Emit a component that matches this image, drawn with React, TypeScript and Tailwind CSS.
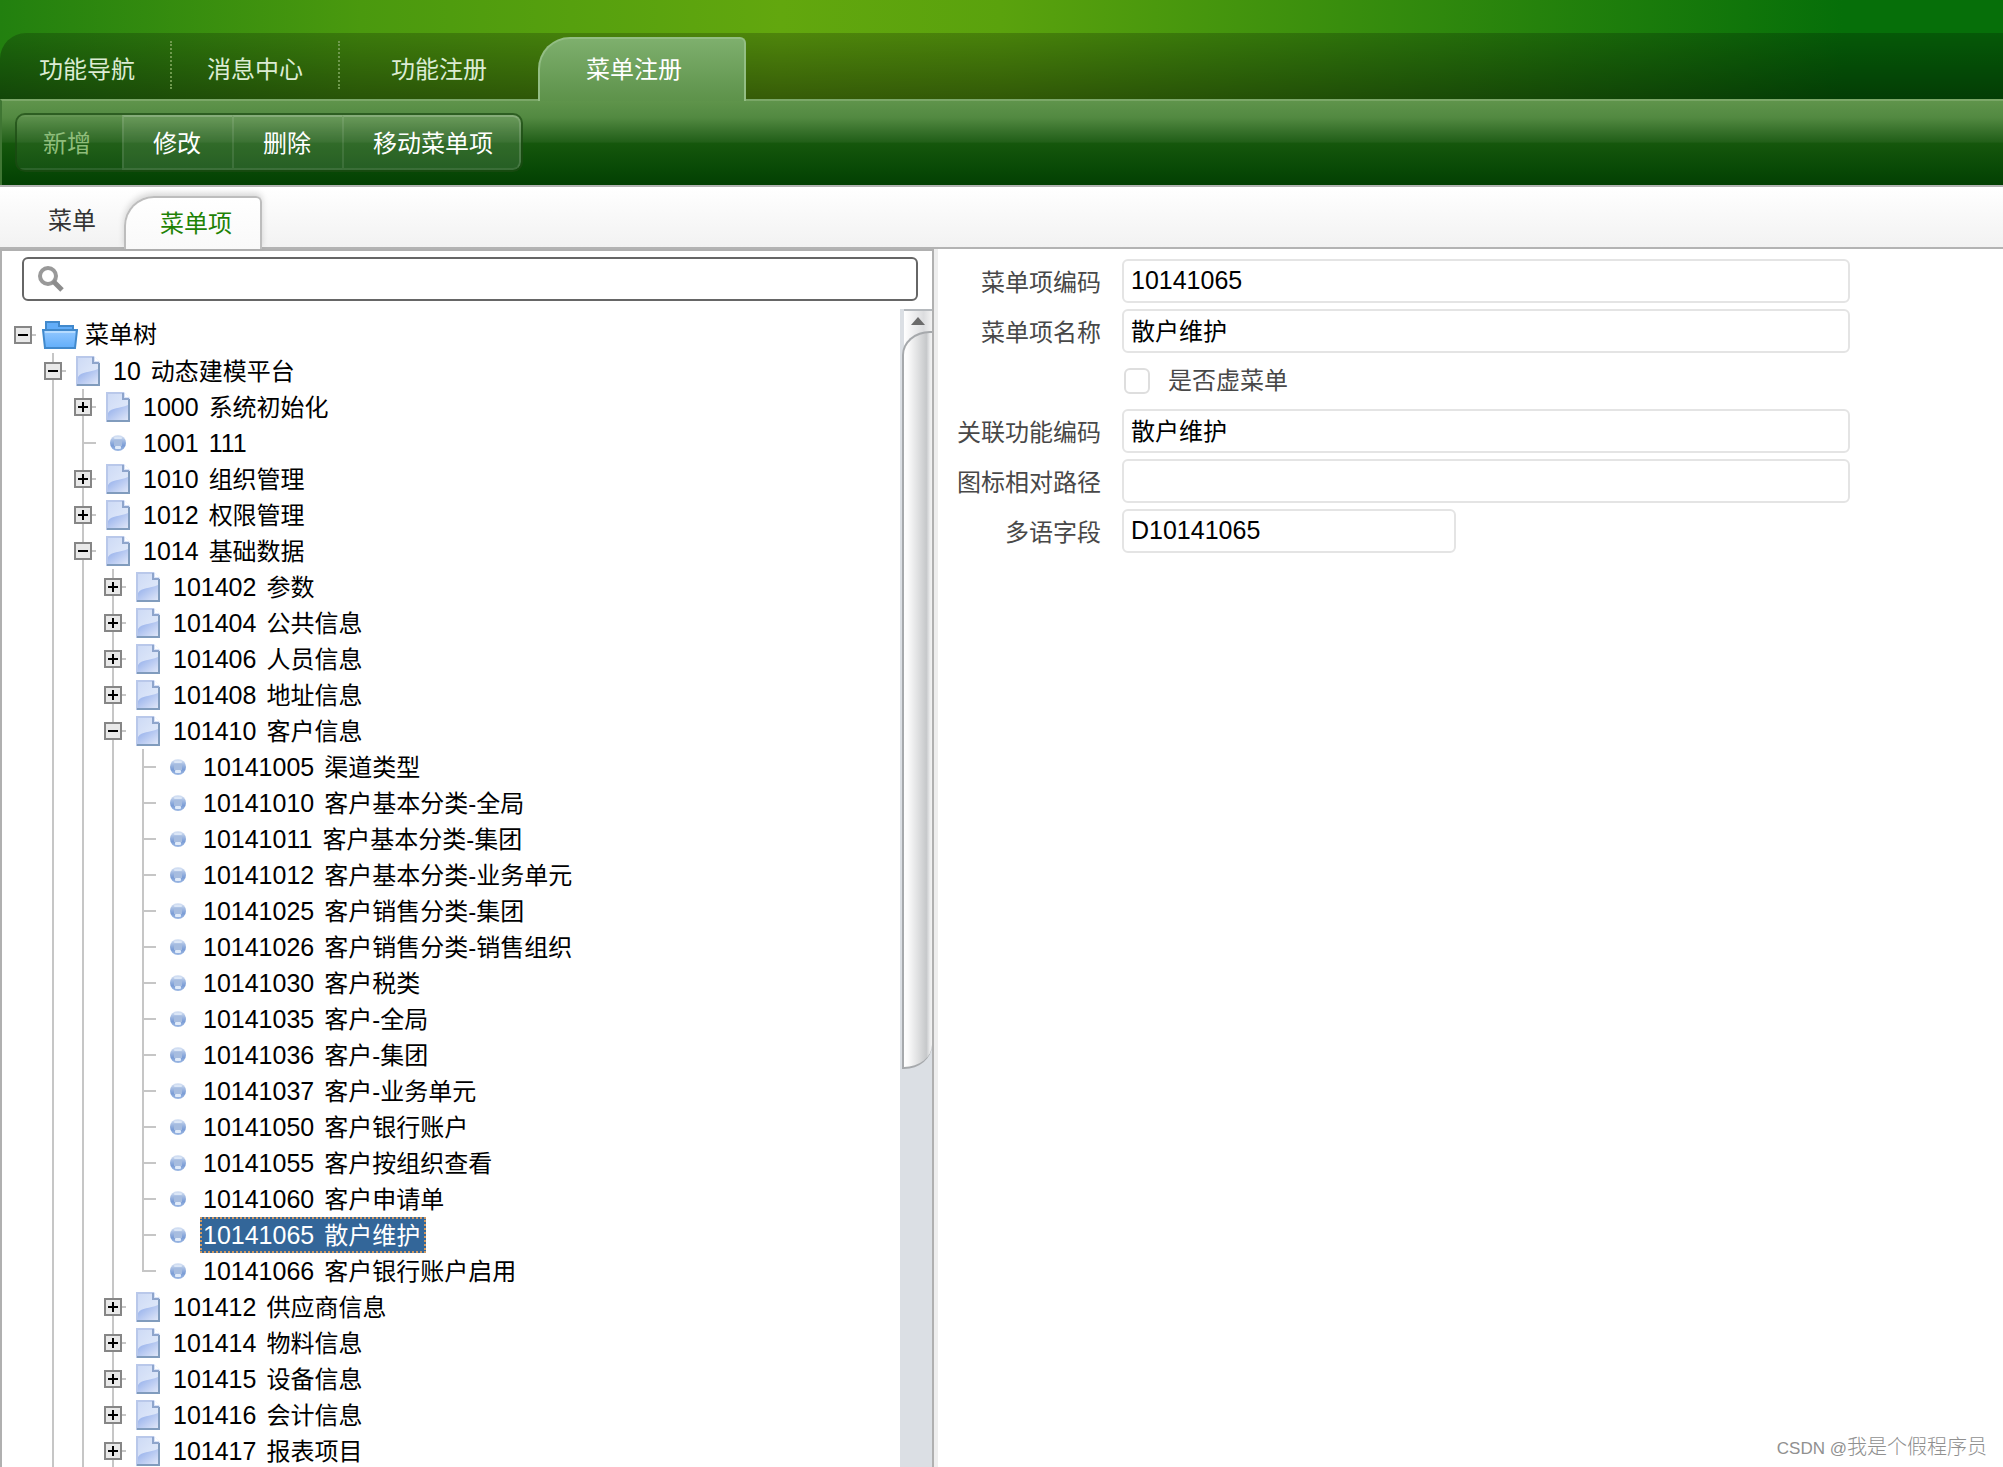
import { useState } from "react";

type Node = {
  level: number;
  code?: string;
  name: string;
  kind: "folder" | "doc" | "leaf";
  open?: boolean;
  last?: boolean;
};

const nodes: Node[] = [
  { level: 0, name: "菜单树", kind: "folder", open: true },
  { level: 1, code: "10", name: "动态建模平台", kind: "doc", open: true },
  { level: 2, code: "1000", name: "系统初始化", kind: "doc" },
  { level: 2, code: "1001", name: "111", kind: "leaf" },
  { level: 2, code: "1010", name: "组织管理", kind: "doc" },
  { level: 2, code: "1012", name: "权限管理", kind: "doc" },
  { level: 2, code: "1014", name: "基础数据", kind: "doc", open: true },
  { level: 3, code: "101402", name: "参数", kind: "doc" },
  { level: 3, code: "101404", name: "公共信息", kind: "doc" },
  { level: 3, code: "101406", name: "人员信息", kind: "doc" },
  { level: 3, code: "101408", name: "地址信息", kind: "doc" },
  { level: 3, code: "101410", name: "客户信息", kind: "doc", open: true },
  { level: 4, code: "10141005", name: "渠道类型", kind: "leaf" },
  { level: 4, code: "10141010", name: "客户基本分类-全局", kind: "leaf" },
  { level: 4, code: "10141011", name: "客户基本分类-集团", kind: "leaf" },
  { level: 4, code: "10141012", name: "客户基本分类-业务单元", kind: "leaf" },
  { level: 4, code: "10141025", name: "客户销售分类-集团", kind: "leaf" },
  { level: 4, code: "10141026", name: "客户销售分类-销售组织", kind: "leaf" },
  { level: 4, code: "10141030", name: "客户税类", kind: "leaf" },
  { level: 4, code: "10141035", name: "客户-全局", kind: "leaf" },
  { level: 4, code: "10141036", name: "客户-集团", kind: "leaf" },
  { level: 4, code: "10141037", name: "客户-业务单元", kind: "leaf" },
  { level: 4, code: "10141050", name: "客户银行账户", kind: "leaf" },
  { level: 4, code: "10141055", name: "客户按组织查看", kind: "leaf" },
  { level: 4, code: "10141060", name: "客户申请单", kind: "leaf" },
  { level: 4, code: "10141065", name: "散户维护", kind: "leaf" },
  { level: 4, code: "10141066", name: "客户银行账户启用", kind: "leaf", last: true },
  { level: 3, code: "101412", name: "供应商信息", kind: "doc" },
  { level: 3, code: "101414", name: "物料信息", kind: "doc" },
  { level: 3, code: "101415", name: "设备信息", kind: "doc" },
  { level: 3, code: "101416", name: "会计信息", kind: "doc" },
  { level: 3, code: "101417", name: "报表项目", kind: "doc" },
];

const FolderIcon = () => (
  <svg width="36" height="30" viewBox="0 0 36 30" className="ml-1">
    <defs>
      <linearGradient id="folder" x1="0" y1="0" x2="0" y2="1">
        <stop offset="0" stopColor="#93c8ff" />
        <stop offset="1" stopColor="#62aefa" />
      </linearGradient>
    </defs>
    <path d="M4 11V2h13v4h14v6z" fill="#62adf8" stroke="#4189cc" strokeWidth="2" />
    <path d="M1 10h34l-2 18H3z" fill="url(#folder)" stroke="#4189cc" strokeWidth="2" />
    <path d="M3 12h30" stroke="#b5dbff" strokeWidth="2" />
  </svg>
);

const DocIcon = () => (
  <svg width="24" height="30" viewBox="0 0 24 30" className="ml-2">
    <defs>
      <linearGradient id="docTop" x1="0" y1="0" x2="1" y2="1">
        <stop offset="0" stopColor="#ccd9f5" />
        <stop offset="1" stopColor="#e6eefb" />
      </linearGradient>
      <linearGradient id="docWave" x1="0" y1="0" x2="1" y2="1">
        <stop offset="0" stopColor="#8eabea" />
        <stop offset="1" stopColor="#dfe6f8" />
      </linearGradient>
    </defs>
    <path d="M0 0h18l6 6v24H0z" fill="url(#docTop)" />
    <path d="M2 21c4-6 11-4 20-8v15H2z" fill="url(#docWave)" />
    <path d="M1 30V1h17" fill="none" stroke="#b9c8ea" strokeWidth="2" />
    <path d="M23 7v22H1" fill="none" stroke="#819cbd" strokeWidth="2" />
    <path d="M17 1v6h6" fill="none" stroke="#8ea5cc" strokeWidth="2" />
    <path d="M19 5V1l4 4z" fill="#fff" />
  </svg>
);

const BulletIcon = () => (
  <svg width="16" height="16" viewBox="0 0 16 16" className="ml-3">
    <defs>
      <linearGradient id="bullet" x1="0" y1="0" x2="0" y2="1">
        <stop offset="0" stopColor="#e0e9f7" />
        <stop offset="0.35" stopColor="#a3bbe2" />
        <stop offset="0.65" stopColor="#7b9dd6" />
        <stop offset="1" stopColor="#9db9e4" />
      </linearGradient>
    </defs>
    <circle cx="8" cy="8" r="8" fill="url(#bullet)" />
    <rect x="4" y="5" width="8" height="6" fill="#a6bcdf" />
    <rect x="5" y="11" width="6" height="3" rx="1" fill="#dfeaf9" />
    <rect x="4" y="2" width="8" height="2" rx="1" fill="#dbe6f6" />
  </svg>
);

const Expander = ({ open, label }: { open?: boolean; label: string }) => (
  <button
    type="button"
    aria-label={label}
    className="relative w-[18px] h-[18px] border-2 border-[#868686] bg-[#e9e9e9] flex items-center justify-center"
  >
    <svg width="10" height="10" viewBox="0 0 10 10">
      <path d={open ? "M0 5h10" : "M0 5h10M5 0v10"} stroke="#000" strokeWidth="2" />
    </svg>
  </button>
);

const TreeRow = ({
  node,
  selected,
  onSelect,
}: {
  node: Node;
  selected: boolean;
  onSelect: () => void;
}) => {
  const guides = Array.from({ length: node.level }, (_, i) => i);
  return (
    <li className="flex items-center h-9">
      {guides.map((g) => (
        <span key={g} className="w-[30px] h-9 shrink-0 flex justify-center">
          {g > 0 && <span className="w-0.5 h-9 bg-[#c6c6c6]" />}
        </span>
      ))}
      <span className="relative w-[30px] h-9 shrink-0 flex items-center justify-center">
        {node.level > 0 && (
          <span
            className={`absolute top-0 left-[14px] w-0.5 bg-[#c6c6c6] ${node.last ? "h-[19px]" : "h-9"}`}
          />
        )}
        <span className="absolute left-[14px] top-[17px] w-[14px] h-0.5 bg-[#c6c6c6]" />
        {node.kind !== "leaf" && <Expander open={node.open} label={node.code ?? node.name} />}
      </span>
      <span className="w-[42px] shrink-0">
        {node.kind === "folder" && <FolderIcon />}
        {node.kind === "doc" && <DocIcon />}
        {node.kind === "leaf" && <BulletIcon />}
      </span>
      <button
        type="button"
        onClick={onSelect}
        className={`h-9 pb-0.5 pr-1 flex items-baseline whitespace-nowrap text-2xl leading-8 border-2 border-dotted ${
          selected ? "bg-[#336699] text-white border-[#d29a62]" : "border-transparent text-black"
        } ${node.code ? "pl-px" : "pl-[3px]"}`}
      >
        {node.code && <span className="mr-2.5 text-[25px] leading-8">{node.code}</span>}
        <span className={/^\d/.test(node.name) ? "text-[25px] leading-8" : ""}>{node.name}</span>
      </button>
    </li>
  );
};

const Field = ({ id, label, value, short }: { id: string; label: string; value: string; short?: boolean }) => (
  <div className="flex items-center">
    <label htmlFor={id} className="w-[163px] pt-1 mr-[21px] text-right text-[#484848] leading-8">
      {label}
    </label>
    <span className="flex-1">
      <input
        id={id}
        defaultValue={value}
        className={`h-11 px-[7px] border-2 border-[#e4e4e4] rounded-md outline-none text-black ${
          short ? "w-[334px]" : "w-full"
        } ${/^\w/.test(value) ? "text-[25px] pb-0.5" : "text-2xl pb-1"}`}
      />
    </span>
  </div>
);

export default function App() {
  const [selected, setSelected] = useState("10141065");

  return (
    <div className="h-screen flex flex-col overflow-hidden bg-white text-2xl font-['Liberation_Sans','Noto_Sans_CJK_SC',sans-serif]">
      <header className="bg-[linear-gradient(90deg,#22800f_0%,#4a990e_18%,#62a70e_39%,#5aa20d_50%,#2f880d_72%,#066f09_92%)]">
        <nav className="mt-[33px] h-[66px] flex items-end rounded-tl-[26px] bg-linear-to-b from-black/20 to-black/45 text-[#dcecd4]">
          <button type="button" className="h-full pl-[39px] pr-[35px] pb-2 pt-4 leading-8">
            功能导航
          </button>
          <span className="h-12 mb-2.5 border-l-2 border-dotted border-[#6f9a4e]" />
          <button type="button" className="h-full px-[35px] pb-2 pt-4 leading-8">
            消息中心
          </button>
          <span className="h-12 mb-2.5 border-l-2 border-dotted border-[#6f9a4e]" />
          <button type="button" className="h-full px-[51px] pb-2 pt-4 leading-8">
            功能注册
          </button>
          <button
            type="button"
            className="relative -mb-0.5 h-16 pl-[46px] pr-[62px] leading-8 text-white border-2 border-b-0 border-[#93be84] rounded-tl-[32px] rounded-tr-md bg-linear-to-b from-[#7eaf6d] to-[#5d924a]"
          >
            菜单注册
          </button>
        </nav>
      </header>

      <div className="pt-3 pb-[13px] pl-[13px] border-t-2 border-l-2 border-t-[#7aa767] border-l-[#3f7633] bg-[linear-gradient(180deg,#5f944b_0%,#528941_20%,#356f29_37%,#215f18_49%,#15570c_50%,#074705_85%,#034003_100%)]">
        <div className="w-fit flex border-2 border-[#1c4a14]/70 rounded-[10px] overflow-hidden text-white">
          <button
            type="button"
            disabled
            className="h-[55px] pl-[26px] pr-[31px] pt-0.5 leading-8 text-[#8fbd7b] bg-white/5 border-y-2 border-t-white/5 border-b-white/10"
          >
            新增
          </button>
          {["修改", "删除", "移动菜单项"].map((t) => (
            <button
              type="button"
              key={t}
              className="h-[55px] pl-[29px] pr-[31px] last:pr-[26px] last:border-r-2 last:rounded-r-lg pt-0.5 leading-8 bg-white/12 border-l-2 border-y-2 border-l-white/10 border-r-white/15 border-t-white/20 border-b-white/10"
            >
              {t}
            </button>
          ))}
        </div>
      </div>

      <nav className="h-16 shrink-0 flex items-end pl-6 border-y-2 border-[#b3b3b3] bg-linear-to-b from-white to-[#f2f2f2]">
        <button type="button" className="h-full pl-6 pr-7 pt-2 text-[#333]">
          菜单
        </button>
        <button
          type="button"
          className="relative -mb-0.5 h-[53px] pl-[34px] pr-7 border-2 border-b-0 border-[#bdbdbd] rounded-tl-[30px] rounded-tr-md bg-linear-to-b from-white to-[#f9f9f9] text-[#1e8205] shadow-[0_-3px_6px_rgba(0,0,0,0.15)]"
        >
          菜单项
        </button>
      </nav>

      <main className="flex-1 min-h-0 grid grid-cols-[934fr_1069fr]">
        <section className="min-h-0 flex flex-col border-2 border-b-0 border-[#b0b0b0]">
          <label className="mt-1.5 ml-5 mr-3.5 h-11 shrink-0 flex items-center pl-3.5 border-2 border-[#666] rounded-md">
            <svg width="26" height="26" viewBox="0 0 26 26">
              <circle cx="10" cy="10" r="8" fill="none" stroke="#999" strokeWidth="4" />
              <path d="M15 15l9 9" stroke="#8c8c8c" strokeWidth="5" />
            </svg>
            <input type="search" aria-label="菜单树" className="flex-1 ml-2 outline-none" />
          </label>
          <div className="flex-1 min-h-0 mt-2 flex">
            <ul className="flex-1 min-w-0 pl-1.5 pt-2 overflow-hidden">
              {nodes.map((n) => (
                <TreeRow
                  key={n.code ?? n.name}
                  node={n}
                  selected={n.code === selected}
                  onSelect={() => setSelected(n.code ?? "")}
                />
              ))}
            </ul>
            <div className="w-8 flex flex-col bg-[#dbdfe4]">
              <div className="flex-1 flex flex-col ml-1 bg-[#dbdfe4]">
                <div className="h-[22px] shrink-0 pt-1.5 flex justify-center items-start border-t-2 border-[#b5b9bd] bg-[linear-gradient(90deg,#fff,#dcdddf_70%,#f2f2f2)]">
                  <svg width="14" height="8" viewBox="0 0 14 8">
                    <path d="M0 8l7-8 7 8z" fill="#6b6b6b" />
                  </svg>
                </div>
                <div className="flex-1 bg-[linear-gradient(90deg,#fff,#dcdddf_70%,#f2f2f2)] bg-[length:100%_30px] bg-no-repeat">
                  <div className="-ml-0.5 h-[65%] border-2 border-r-0 border-[#a6a9ac] rounded-tl-[28px_24px] rounded-br-[28px_24px] bg-[linear-gradient(90deg,#fff_0%,#fafafa_15%,#dfe0e1_50%,#c6c8ca_80%,#e9eaeb_92%,#f3f3f3_100%)]" />
                </div>
              </div>
            </div>
          </div>
        </section>

        <form className="border-l-4 border-[#eeeeee] pt-2.5 pr-[153px] flex flex-col gap-1.5">
          <Field id="code" label="菜单项编码" value="10141065" />
          <Field id="name" label="菜单项名称" value="散户维护" />
          <div className="flex items-center h-11 ml-[186px]">
            <input
              id="virtual"
              type="checkbox"
              className="appearance-none w-[26px] h-[26px] border-2 border-[#dedede] rounded-md"
            />
            <label htmlFor="virtual" className="pl-[18px] text-[#484848]">
              是否虚菜单
            </label>
          </div>
          <Field id="func" label="关联功能编码" value="散户维护" />
          <Field id="icon" label="图标相对路径" value="" />
          <Field id="lang" label="多语字段" value="D10141065" short />
        </form>
      </main>

      <span className="absolute right-4 bottom-1.5 text-xl font-light text-[#909090] font-['Liberation_Sans','Noto_Sans_CJK_SC',sans-serif]">
        <span className="text-[17px]">CSDN @</span>我是个假程序员
      </span>
    </div>
  );
}
